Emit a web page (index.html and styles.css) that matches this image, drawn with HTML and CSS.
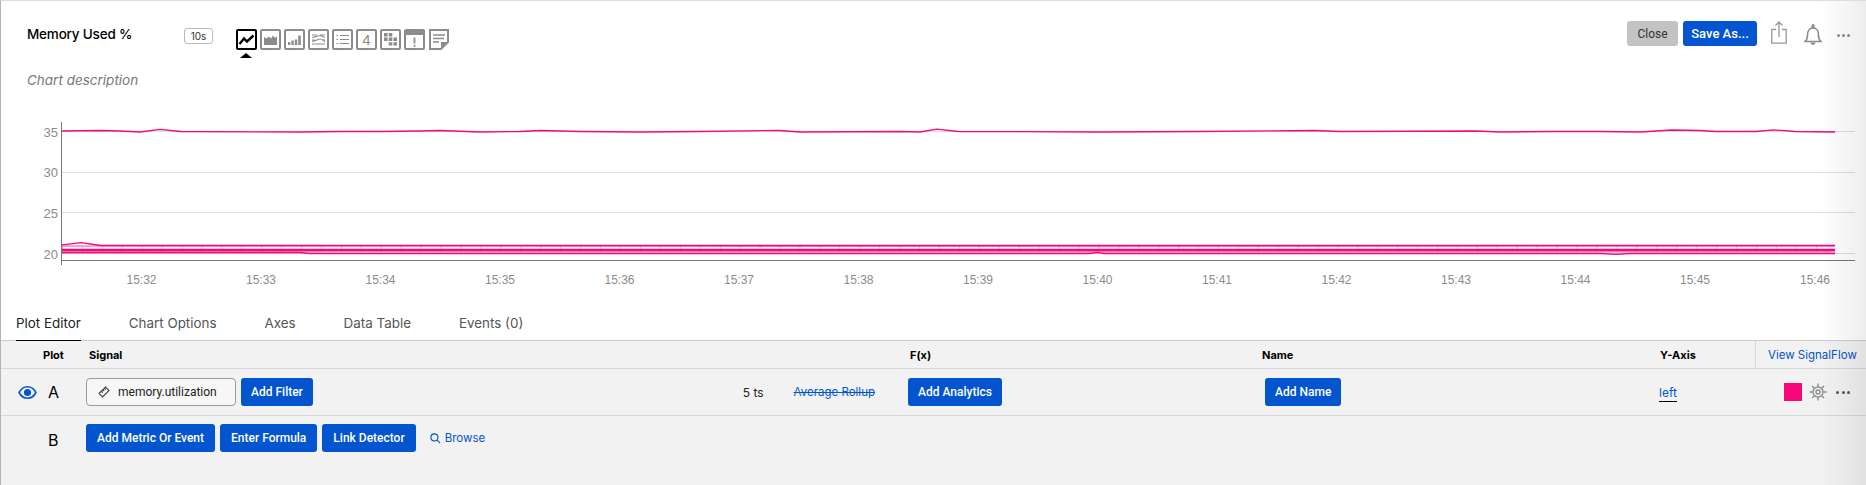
FILE: index.html
```html
<!DOCTYPE html>
<html lang="en">
<head>
<meta charset="utf-8">
<title>Memory Used %</title>
<link rel="stylesheet" href="styles.css">
</head>
<body>

<div class="page">

  <div class="chart_header">
    <div class="title_block">
      <div class="title_row">
        <h1 class="chart_title">Memory Used %</h1>
        <span class="resolution">10s</span>
        <div class="chart_types">
          <div class="type_wrap">
            <svg class="type_icon active" viewBox="0 0 21 21"><rect x="1" y="1" width="19" height="19" rx="1"/><path class="stroke" d="M3.500 15 L8 9.500 L11 12.500 L17.500 6.500" stroke-width="2.400"/></svg>
            <span class="type_arrow"></span>
          </div>
          <svg class="type_icon" viewBox="0 0 21 21"><rect x="1" y="1" width="19" height="19" rx="1"/><path class="solid" d="M4 16 V8 L6.500 9.500 L9 7.500 L11 9.500 L13 6.500 L15 9 L17 7 V16 Z"/></svg>
          <svg class="type_icon" viewBox="0 0 21 21"><rect x="1" y="1" width="19" height="19" rx="1"/><path class="solid" d="M4 13h2.400v3H4z M7.400 11.500h2.400V16H7.400z M10.800 10.500h2.400V16h-2.400z M14.200 6.500h2.600V16h-2.600z"/></svg>
          <svg class="type_icon" viewBox="0 0 21 21"><rect x="1" y="1" width="19" height="19" rx="1"/><path class="stroke" d="M4 6h5 M12 6h5 M4 8.500Q7 8 10 7T17 8.500 M4 11h3 M14 11h3 M4 12.500Q7 12 10 10.500T17 12.500 M4 15h13" stroke-width="1.100"/></svg>
          <svg class="type_icon" viewBox="0 0 21 21"><rect x="1" y="1" width="19" height="19" rx="1"/><path class="stroke" d="M8 6.500h9 M8 10.500h9 M8 14.500h9 M4.500 6.500h1.600 M4.500 10.500h1.600 M4.500 14.500h1.600" stroke-width="1.200"/></svg>
          <svg class="type_icon" viewBox="0 0 21 21"><rect x="1" y="1" width="19" height="19" rx="1"/><text class="type_num" x="10.500" y="15.500">4</text></svg>
          <svg class="type_icon" viewBox="0 0 21 21"><rect x="1" y="1" width="19" height="19" rx="1"/><path class="solid" d="M4 4h3.600v3.400H4z M8.700 4h3.600v3.400H8.700z M4 8.600h3.600V12H4z M8.700 8.600h3.600V12H8.700z M13.400 8.600H17V12h-3.600z M8.700 13.200h3.600v3.400H8.700z M13.400 13.200H17v3.400h-3.600z"/></svg>
          <svg class="type_icon" viewBox="0 0 21 21"><rect x="1" y="1" width="19" height="19" rx="1"/><path class="solid" d="M1 1h19v5H1z M9.600 8.500h1.800v6H9.600z M9.600 15.800h1.800v1.900H9.600z"/></svg>
          <svg class="type_icon" viewBox="0 0 21 21"><path class="stroke" d="M2 1 H20 V13 L13 20 H2 Z" stroke-width="2"/><path class="solid" d="M13 20 V13 H20 Z"/><path class="stroke" d="M5 6h12 M5 9.500h11 M5 13h6" stroke-width="1.400"/></svg>
        </div>
      </div>
      <p class="chart_desc">Chart description</p>
    </div>
    <div class="header_actions">
      <button class="btn btn_close">Close</button>
      <button class="btn btn_save">Save As...</button>
      <svg class="share_icon" viewBox="0 0 16 23"><path d="M5 8.500H.8v13.700h14.400V8.500H11 M8 16V1 M4.500 4.500 8 1l3.500 3.500"/></svg>
      <svg class="bell_icon" viewBox="0 0 18 22"><path d="M1 17.500c2-1.500 2.500-3 2.500-6.500C3.500 7 5.500 4 9 4s5.500 3 5.500 7c0 3.500.5 5 2.500 6.500z"/><path class="bell_fill" d="M7.500 1.500a1.500 1.500 0 0 1 3 0V4h-3z M6.500 18.500h5a2.500 2.500 0 0 1-5 0z"/></svg>
      <span class="more_dots"><i></i><i></i><i></i></span>
    </div>
  </div>

  <svg class="chart" viewBox="0 100 1866 200">
    <g class="grid">
      <line x1="62" y1="131.500" x2="1855" y2="131.500"/>
      <line x1="62" y1="172.500" x2="1855" y2="172.500"/>
      <line x1="62" y1="212.500" x2="1855" y2="212.500"/>
      <line x1="62" y1="253.500" x2="1855" y2="253.500"/>
    </g>
    <g class="axis">
      <line x1="61.500" y1="122" x2="61.500" y2="265"/>
      <line x1="61" y1="260.500" x2="1855" y2="260.500"/>
    </g>
    <g class="y_labels">
      <text x="58" y="137">35</text>
      <text x="58" y="177">30</text>
      <text x="58" y="218">25</text>
      <text x="58" y="259">20</text>
    </g>
    <g class="x_labels">
      <text x="141.500" y="284">15:32</text>
      <text x="261" y="284">15:33</text>
      <text x="380.500" y="284">15:34</text>
      <text x="500" y="284">15:35</text>
      <text x="619.500" y="284">15:36</text>
      <text x="739" y="284">15:37</text>
      <text x="858.500" y="284">15:38</text>
      <text x="978" y="284">15:39</text>
      <text x="1097.500" y="284">15:40</text>
      <text x="1217" y="284">15:41</text>
      <text x="1336.500" y="284">15:42</text>
      <text x="1456" y="284">15:43</text>
      <text x="1575.500" y="284">15:44</text>
      <text x="1695" y="284">15:45</text>
      <text x="1815" y="284">15:46</text>
    </g>
    <path class="band" d="M62 249.500H1835V254H62Z"/>
    <g class="series">
      <path d="M62 131 L100 130.500 L120 131 L140 132 L160 129.300 L181 131.500 L300 132 L340 131.500 L380 131.500 L420 131 L440 130.500 L480 132 L520 131.500 L541 130.500 L580 131.500 L640 132 L700 131.500 L779 130.500 L800 132 L900 131.500 L920 132 L937 129.200 L958 131.500 L1100 132 L1200 131.500 L1315 130.500 L1340 131.500 L1476 131 L1500 132 L1550 131.500 L1600 131.500 L1640 132 L1672 130 L1700 130.500 L1716 131.500 L1756 131.500 L1773 129.800 L1795 131.500 L1835 132"/>
      <path d="M62 244.800 L81 242.600 L101 245.500 L1150 245.500 L1500 245.500 L1640 245.500 L1835 245.500"/>
      <path d="M62 246 L101 246 L1100 246.500 L1635 246 L1835 246" stroke-opacity=".5"/>
      <path class="thick" d="M62 249.800 L1835 249.800"/>
      <path d="M62 252.500 L300 252.500 L310 253.500 L1090 253.500 L1097 252.300 L1104 253.500 L1600 253.500 L1616 254.300 L1630 253.500 L1835 253.500"/>
      <path d="M62 251 L500 251.500 L1700 251.500 L1835 251.500" stroke-opacity=".4"/>
      <path class="ticks" d="M62 248.500H1835"/>
    </g>
  </svg>

  <div class="tabs">
    <a class="tab tab_active">Plot Editor</a>
    <a class="tab">Chart Options</a>
    <a class="tab">Axes</a>
    <a class="tab">Data Table</a>
    <a class="tab">Events (0)</a>
  </div>

  <div class="plots">
    <div class="plot_row plot_head">
      <div class="plot_cell">Plot</div>
      <div class="head_signal">Signal</div>
      <div class="head_fx">F(x)</div>
      <div>Name</div>
      <div class="head_y">Y-Axis</div>
      <a class="signalflow">View SignalFlow</a>
    </div>

    <div class="plot_row plot_a">
      <div class="plot_cell">
        <svg class="eye_icon" viewBox="0 0 18 14"><path d="M1 7c2-3.700 5-5.500 8-5.500S15 3.300 17 7c-2 3.700-5 5.500-8 5.500S3 10.700 1 7z"/><circle cx="9" cy="7" r="3.400"/></svg>
        <span class="plot_letter">A</span>
      </div>
      <div class="signal_cell">
        <div class="signal_input">
          <svg class="ruler_icon" viewBox="0 0 12 12"><path d="M1 7.500 7.500 1l3.500 3.500L4.500 11z M3.500 5.500l1.200 1.200 M5 4l1.200 1.200 M6.500 2.500l1.200 1.200"/></svg>
          <span>memory.utilization</span>
        </div>
        <button class="btn">Add Filter</button>
        <span class="ts_count">5 ts</span>
        <a class="rollup">Average Rollup</a>
      </div>
      <div><button class="btn">Add Analytics</button></div>
      <div class="name_cell"><button class="btn">Add Name</button></div>
      <div class="y_cell"><a class="y_link">left</a></div>
      <div class="row_actions">
        <span class="swatch"></span>
        <svg class="gear_icon" viewBox="0 0 18 18"><circle cx="9" cy="9" r="5"/><circle cx="9" cy="9" r="2"/><path d="M9 .5v3 M9 14.500v3 M.5 9h3 M14.500 9h3 M3 3l2.100 2.100 M12.900 12.900 15 15 M15 3l-2.100 2.100 M5.100 12.900 3 15"/></svg>
        <span class="more_dots dark"><i></i><i></i><i></i></span>
      </div>
    </div>

    <div class="plot_row plot_b">
      <div class="plot_cell"><span class="plot_letter">B</span></div>
      <div class="signal_cell">
        <button class="btn">Add Metric Or Event</button>
        <button class="btn">Enter Formula</button>
        <button class="btn">Link Detector</button>
        <a class="browse">
          <svg class="search_icon" viewBox="0 0 12 12"><circle cx="4.800" cy="4.800" r="3.800"/><path d="M7.600 7.600 11 11"/></svg>
          Browse
        </a>
      </div>
    </div>
  </div>

  <div class="edge_fade"></div>
</div>

</body>
</html>
```

FILE: styles.css
```css
*,*:after,*:before{
  box-sizing: border-box;
}
body{
  font-family: "Inter", "Liberation Sans", sans-serif;
  font-size: 12px;
  margin: 0;
  background: #fff;
  color: #000;
}
.page{
  position: relative;
  width: 1866px;
  height: 485px;
  overflow: hidden;
  border-top: 1px solid #ddd;
  border-left: 1px solid #b4b4b4;
}

/* header */
.chart_header{
  display: flex;
  justify-content: space-between;
  height: 99px;
}
.title_block{
  padding: 28px 0 0 26px;
}
.title_row{
  display: flex;
  align-items: flex-start;
}
.chart_title{
  width: 157px;
  margin: 0;
  font-size: 13.500px;
  font-weight: 500;
  letter-spacing: -.2px;
  line-height: 10px;
}
.resolution{
  width: 29px;
  height: 16px;
  margin-top: -1px;
  border: 1px solid #bbb;
  border-radius: 3px;
  font-size: 10px;
  line-height: 14px;
  text-align: center;
  color: #333;
}
.chart_types{
  display: flex;
  gap: 3px;
  margin-left: 23px;
}
.type_wrap{
  position: relative;
  height: 21px;
}
.type_icon{
  display: block;
  width: 21px;
  height: 21px;
}
.type_icon rect{
  fill: #fff;
  stroke: #8c8c8c;
  stroke-width: 2;
}
.type_icon .solid{
  fill: #8c8c8c;
}
.type_icon .stroke{
  fill: none;
  stroke: #8c8c8c;
}
.type_num{
  font-family: "Liberation Sans", sans-serif;
  font-size: 15px;
  fill: #8c8c8c;
  text-anchor: middle;
}
.type_icon.active rect{
  stroke: #000;
}
.type_icon.active .stroke{
  stroke: #000;
}
.type_arrow{
  position: absolute;
  left: 4px;
  top: 24px;
  border-left: 6px solid transparent;
  border-right: 6px solid transparent;
  border-bottom: 5px solid #000;
}
.chart_desc{
  margin: 22px 0 0;
  font-size: 13.500px;
  font-style: italic;
  color: #777;
}
.header_actions{
  display: flex;
  align-items: flex-start;
  padding: 20px 16px 0 0;
}
.btn{
  height: 28px;
  padding: 0 10px;
  border: 0;
  border-radius: 3px;
  background: #0255cf;
  color: #fff;
  font-family: "Roboto", "Liberation Sans", sans-serif;
  font-size: 12px;
  font-weight: 500;
  white-space: nowrap;
}
.header_actions .btn{
  height: 25px;
  margin-left: 5px;
  padding: 0;
}
.header_actions .btn_close{
  width: 51px;
  background: #c3c3c3;
  color: #333;
  font-weight: 400;
}
.header_actions .btn_save{
  width: 74px;
  font-size: 13px;
}
.share_icon{
  width: 16px;
  height: 23px;
  margin-left: 14px;
  fill: none;
  stroke: #999;
  stroke-width: 1.300;
}
.bell_icon{
  width: 18px;
  height: 22px;
  margin: 3px 0 0 17px;
  fill: none;
  stroke: #8c8c8c;
  stroke-width: 1.600;
}
.bell_icon .bell_fill{
  fill: #8c8c8c;
  stroke: none;
}
.more_dots{
  display: flex;
  gap: 2px;
  margin: 13px 0 0 15px;
}
.more_dots i{
  width: 3px;
  height: 3px;
  border-radius: 50%;
  background: #8c8c8c;
}
.more_dots.dark{
  margin: 0 0 0 9px;
  gap: 2.500px;
}
.more_dots.dark i{
  background: #555;
}

/* chart */
.chart{
  display: block;
  margin-left: -1px;
  width: 1866px;
  height: 200px;
}
.grid line{
  stroke: #ddd;
  stroke-width: 1;
}
.axis line{
  stroke: #777;
  stroke-width: 1;
}
.y_labels text, .x_labels text{
  font-family: "Liberation Sans", sans-serif;
  font-size: 12px;
  fill: #8c8c8c;
}
.y_labels text{
  text-anchor: end;
  font-size: 13px;
}
.x_labels text{
  text-anchor: middle;
}
.band{
  fill: #f6087a;
  fill-opacity: .18;
}
.series path{
  fill: none;
  stroke: #f6087a;
  stroke-width: 1.300;
  stroke-linejoin: round;
}
.series .thick{
  stroke-width: 2.200;
}
.series .ticks{
  stroke-width: 6;
  stroke-opacity: .25;
  stroke-dasharray: 1 18.930;
}

/* tabs */
.tabs{
  display: flex;
  height: 41px;
  padding-left: 15px;
  border-bottom: 1px solid #ccc;
}
.tab{
  height: 41px;
  margin-right: 48px;
  padding-top: 15px;
  font-size: 13.400px;
  color: #555;
}
.tab_active{
  border-bottom: 1px solid #000;
  color: #222;
}

/* plot table */
.plots{
  height: 145px;
  background: #f2f2f2;
}
.plot_row{
  display: grid;
  grid-template-columns: 85px 822px 354px 396px 97px 111px;
  align-items: center;
  border-bottom: 1px solid #d8d8d8;
}
.plot_head{
  height: 28px;
  font-weight: 700;
  font-size: 11px;
}
.plot_head .plot_cell{
  padding-left: 42px;
}
.head_signal{
  padding-left: 3px;
}
.head_fx, .head_y{
  padding-left: 2px;
}
.signalflow{
  display: flex;
  align-items: center;
  height: 28px;
  padding-left: 12px;
  border-left: 1px solid #d8d8d8;
  color: #0255cf;
  font-weight: 400;
  font-size: 11.500px;
  white-space: nowrap;
}
.plot_a{
  height: 47px;
}
.plot_b{
  align-items: start;
  border-bottom: 0;
  padding-top: 8px;
}
.plot_b .btn{
  padding: 0 11px;
}
.plot_cell{
  display: flex;
  align-items: center;
}
.plot_a .plot_cell{
  padding-left: 17px;
}
.plot_b .plot_cell{
  padding: 6px 0 0 47px;
}
.eye_icon{
  width: 19px;
  height: 15px;
  margin-right: 11px;
  fill: none;
  stroke: #0255cf;
  stroke-width: 1.500;
}
.eye_icon circle{
  fill: #0255cf;
  stroke: none;
}
.plot_letter{
  font-size: 16px;
}
.signal_cell{
  display: flex;
  align-items: center;
  gap: 5px;
}
.signal_input{
  display: flex;
  align-items: center;
  width: 150px;
  height: 28px;
  padding-left: 11px;
  border: 1px solid #999;
  border-radius: 4px;
  background: #f7f7f7;
  font-family: "Roboto", "Liberation Sans", sans-serif;
  font-size: 12px;
  color: #222;
}
.ruler_icon{
  width: 12px;
  height: 12px;
  margin-right: 8px;
  fill: none;
  stroke: #444;
  stroke-width: 1.100;
}
.ts_count{
  margin-left: auto;
  margin-right: 25px;
  color: #222;
}
.rollup{
  margin-right: 33px;
  color: #0255cf;
  font-size: 11.500px;
  text-decoration: line-through;
}
.name_cell{
  padding-left: 3px;
}
.y_cell{
  padding-left: 1px;
}
.y_link{
  color: #0255cf;
  border-bottom: 1px solid #000;
  padding-bottom: 1px;
}
.row_actions{
  display: flex;
  align-items: center;
  padding-left: 29px;
}
.swatch{
  width: 18px;
  height: 18px;
  background: #f6087a;
}
.gear_icon{
  width: 18px;
  height: 18px;
  margin-left: 7px;
  fill: none;
  stroke: #8c8c8c;
  stroke-width: 1.400;
}
.browse{
  display: flex;
  align-items: center;
  gap: 4px;
  margin-left: 9px;
  color: #0255cf;
  font-size: 11.500px;
}
.search_icon{
  width: 11px;
  height: 11px;
  fill: none;
  stroke: #0255cf;
  stroke-width: 1.200;
}
.edge_fade{
  position: absolute;
  top: 0;
  right: 0;
  bottom: 0;
  width: 46px;
  background: linear-gradient(to right, rgba(0,0,0,0), rgba(0,0,0,.07));
  pointer-events: none;
}
```
